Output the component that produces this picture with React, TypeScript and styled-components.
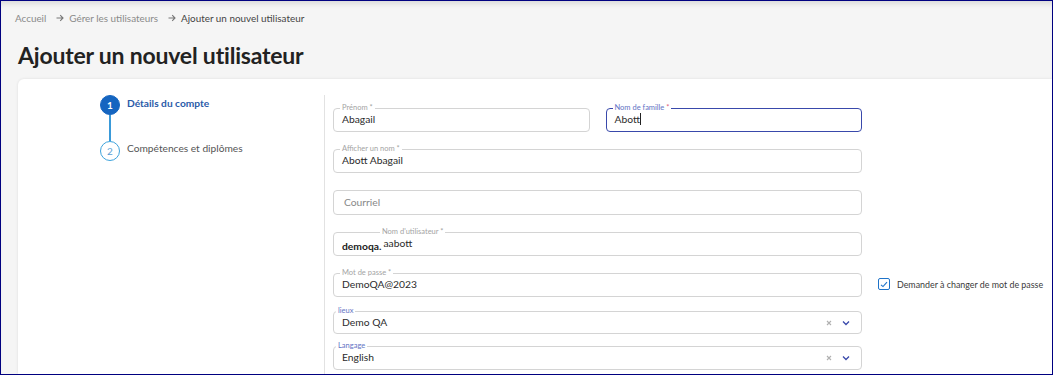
import styled, { createGlobalStyle } from "styled-components";

const GlobalStyle = createGlobalStyle`
  html, body {
    margin: 0;
    padding: 0;
    background: #ffffff;
  }
  * {
    box-sizing: border-box;
  }
`;

const Frame = styled.div`
  width: 1053px;
  height: 375px;
  overflow: hidden;
  border: 1px solid #000080;
  background: #f5f5f5;
  box-shadow: inset 0 7px 7px -5px rgba(0, 0, 0, 0.14);
  font-family: Lato, "Liberation Sans", sans-serif;
  display: flex;
  flex-direction: column;
  padding: 10px 0 0 14px;
`;

const Crumbs = styled.nav`
  display: flex;
  align-items: center;
  gap: 4px;
  font-size: 9.9px;
  line-height: 14px;
  color: #8a8a8a;
`;

const Crumb = styled.span<{ $current?: boolean }>`
  color: ${(p) => (p.$current ? "#444" : "#8a8a8a")};
`;

const Arrow = styled.span`
  display: flex;
  align-items: center;
  color: #777;
  margin: 0 1px 0 6px;
`;

const Title = styled.h1`
  margin: 14px 0 0 3px;
  font-size: 23px;
  line-height: 32px;
  font-weight: 700;
  color: #222;
  letter-spacing: -0.2px;
`;

const Card = styled.div`
  margin: 8px 0 0 3px;
  flex: 1;
  background: #fff;
  border-radius: 6px 0 0 0;
  box-shadow: 0 0 3px rgba(0, 0, 0, 0.1);
  display: grid;
  grid-template-columns: 306px 1fr;
  padding-top: 16px;
`;

const Stepper = styled.div`
  display: flex;
  flex-direction: column;
  padding-left: 82px;
`;

const Step = styled.div`
  display: flex;
  align-items: flex-start;
  gap: 7px;
`;

const StepMark = styled.div`
  display: flex;
  flex-direction: column;
  align-items: center;
`;

const Circle = styled.div<{ $active?: boolean }>`
  width: 20px;
  height: 20px;
  border-radius: 50%;
  display: flex;
  align-items: center;
  justify-content: center;
  font-size: 10px;
  font-weight: ${(p) => (p.$active ? 700 : 400)};
  color: ${(p) => (p.$active ? "#fff" : "#5a9fd6")};
  background: ${(p) => (p.$active ? "#1565c0" : "#fff")};
  border: 1.5px solid ${(p) => (p.$active ? "#1565c0" : "#3ea3dc")};
`;

const Connector = styled.div`
  width: 1.5px;
  height: 26px;
  background: #3a9ad9;
`;

const StepLabel = styled.span<{ $active?: boolean; $mt?: number }>`
  font-size: 10.2px;
  line-height: 16px;
  margin-top: ${(p) => p.$mt ?? 0}px;
  font-weight: ${(p) => (p.$active ? 700 : 400)};
  color: ${(p) => (p.$active ? "#2a5aa8" : "#555")};
`;

const FormCol = styled.div`
  border-left: 1px solid #e2e2e2;
  padding: 8px 0 0 8px;
  display: grid;
  grid-template-columns: 529px auto;
  column-gap: 16px;
  align-content: start;
`;

const Fields = styled.div`
  display: flex;
  flex-direction: column;
`;

const Row = styled.div`
  display: grid;
  grid-template-columns: 1fr 1fr;
  column-gap: 16px;
`;

const Field = styled.fieldset<{ $mt?: number; $focus?: boolean; $pb?: number }>`
  margin: ${(p) => p.$mt ?? 0}px 0 0 0;
  min-width: 0;
  border: ${(p) => (p.$focus ? "1.5px solid #3949ab" : "1px solid #d4d4d4")};
  border-radius: 4px;
  padding: 0 6px ${(p) => p.$pb ?? 5}px 6px;
  display: flex;
  align-items: center;
`;

const Legend = styled.legend<{ $tone?: "muted" | "blue"; $offset?: number }>`
  font-size: 7.5px;
  line-height: 10px;
  padding: 0 2px;
  margin-left: ${(p) => p.$offset ?? 0}px;
  color: ${(p) => (p.$tone === "blue" ? "#6373c4" : "#a4a4a4")};
`;

const Star = styled.span<{ $red?: boolean }>`
  color: ${(p) => (p.$red ? "#e0607a" : "inherit")};
`;

const Value = styled.span<{ $placeholder?: boolean }>`
  flex: 1;
  font-size: 10.3px;
  line-height: 13px;
  color: ${(p) => (p.$placeholder ? "#888" : "#2b2b2b")};
  padding-left: 2px;
`;

const Caret = styled.span`
  display: inline-block;
  width: 1px;
  height: 12px;
  background: #222;
  vertical-align: -2px;
`;

const PlainField = styled.div`
  margin-top: 17px;
  border: 1px solid #d4d4d4;
  border-radius: 4px;
  padding: 5px 8px;
  display: flex;
  align-items: center;
`;

const Prefix = styled.span`
  font-size: 10.3px;
  font-weight: 700;
  color: #222;
  line-height: 13px;
  margin: 3px 0 -3px 2px;
`;

const Suffix = styled.span<{ $blue?: boolean }>`
  display: flex;
  align-items: center;
  padding: 0 5px;
  color: ${(p) => (p.$blue ? "#3949ab" : "#b0b0b0")};
`;

const CheckCol = styled.label`
  grid-column: 2;
  grid-row: 1;
  align-self: start;
  margin-top: 175px;
  display: flex;
  align-items: center;
  gap: 7px;
  font-size: 8.9px;
  white-space: nowrap;
  color: #3a3a3a;
`;

const Box = styled.span`
  width: 12px;
  height: 12px;
  border: 1px solid #1e73c9;
  border-radius: 2px;
  display: flex;
  align-items: center;
  justify-content: center;
`;

function CrumbArrow() {
  return (
    <svg width="8" height="8" viewBox="0 0 8 8">
      <path d="M0.5 4 H7 M4.2 1.2 L7 4 L4.2 6.8" fill="none" stroke="currentColor" strokeWidth="1.1" />
    </svg>
  );
}

function Chevron() {
  return (
    <svg width="8" height="6" viewBox="0 0 8 6">
      <path d="M1 1.5 L4 4.5 L7 1.5" fill="none" stroke="currentColor" strokeWidth="1.3" />
    </svg>
  );
}

function Cross() {
  return (
    <svg width="6" height="6" viewBox="0 0 6 6">
      <path d="M1 1 L5 5 M5 1 L1 5" stroke="currentColor" strokeWidth="1.1" />
    </svg>
  );
}

function Select({ label, value, mt, pb }: { label: string; value: string; mt: number; pb?: number }) {
  return (
    <Field $mt={mt} $pb={pb}>
      <Legend $tone="blue" $offset={-4}>{label}</Legend>
      <Value>{value}</Value>
      <Suffix><Cross /></Suffix>
      <Suffix $blue><Chevron /></Suffix>
    </Field>
  );
}

export default function App() {
  return (
    <>
      <GlobalStyle />
      <Frame>
        <Crumbs>
          <Crumb>Accueil</Crumb>
          <Arrow><CrumbArrow /></Arrow>
          <Crumb>Gérer les utilisateurs</Crumb>
          <Arrow><CrumbArrow /></Arrow>
          <Crumb $current>Ajouter un nouvel utilisateur</Crumb>
        </Crumbs>
        <Title>Ajouter un nouvel utilisateur</Title>
        <Card>
          <Stepper>
            <Step>
              <StepMark>
                <Circle $active>1</Circle>
                <Connector />
              </StepMark>
              <StepLabel $active>Détails du compte</StepLabel>
            </Step>
            <Step>
              <StepMark>
                <Circle>2</Circle>
              </StepMark>
              <StepLabel $mt={-1}>Compétences et diplômes</StepLabel>
            </Step>
          </Stepper>
          <FormCol>
            <Fields>
              <Row>
                <Field>
                  <Legend>Prénom <Star>*</Star></Legend>
                  <Value>Abagail</Value>
                </Field>
                <Field $focus>
                  <Legend $tone="blue">Nom de famille <Star $red>*</Star></Legend>
                  <Value>Abott<Caret /></Value>
                </Field>
              </Row>
              <Field $mt={12}>
                <Legend>Afficher un nom *</Legend>
                <Value>Abott Abagail</Value>
              </Field>
              <PlainField>
                <Value $placeholder>Courriel</Value>
              </PlainField>
              <Field $mt={12}>
                <Legend $offset={40}>Nom d'utilisateur *</Legend>
                <Prefix>demoqa.</Prefix>
                <Value>aabott</Value>
              </Field>
              <Field $mt={12}>
                <Legend>Mot de passe *</Legend>
                <Value>DemoQA@2023</Value>
              </Field>
              <Select label="lieux" value="Demo QA" mt={9} pb={4} />
              <Select label="Langage" value="English" mt={7} />
            </Fields>
            <CheckCol>
              <Box>
                <svg width="8" height="7" viewBox="0 0 8 7">
                  <path d="M1 3.8 L3 5.6 L7 1.2" fill="none" stroke="#1e73c9" strokeWidth="1.1" />
                </svg>
              </Box>
              Demander à changer de mot de passe
            </CheckCol>
          </FormCol>
        </Card>
      </Frame>
    </>
  );
}
